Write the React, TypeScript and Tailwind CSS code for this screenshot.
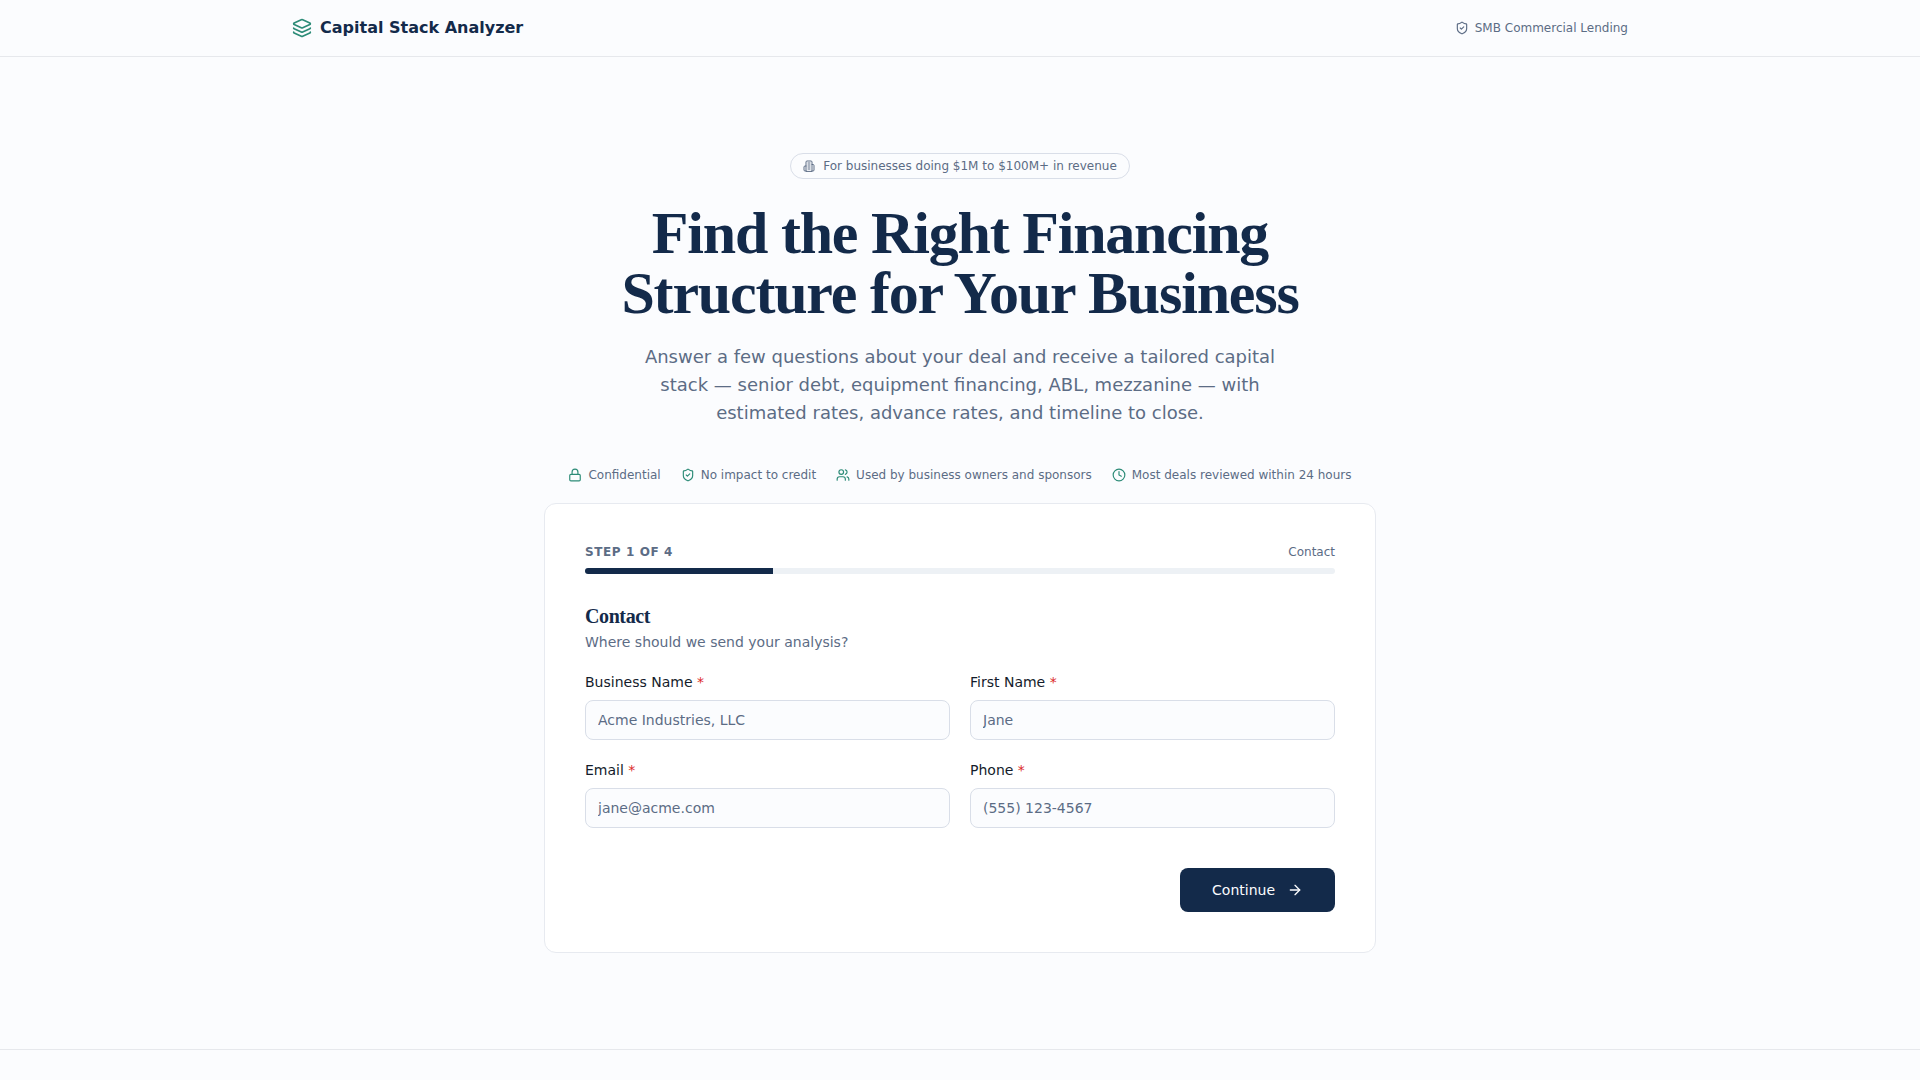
import { ArrowRight, Clock, Layers, Lock, ShieldCheck, Users } from "lucide-react";

const trustItems = [
  { icon: Lock, text: "Confidential" },
  { icon: ShieldCheck, text: "No impact to credit" },
  { icon: Users, text: "Used by business owners and sponsors" },
  { icon: Clock, text: "Most deals reviewed within 24 hours" },
];

const fields = [
  { id: "businessName", label: "Business Name", type: "text", placeholder: "Acme Industries, LLC" },
  { id: "firstName", label: "First Name", type: "text", placeholder: "Jane" },
  { id: "email", label: "Email", type: "email", placeholder: "jane@acme.com" },
  { id: "phone", label: "Phone", type: "tel", placeholder: "(555) 123-4567" },
];

const steps = ["Contact", "Business", "Deal", "Review"];

function BuildingIcon({ className }: { className?: string }) {
  return (
    <svg
      viewBox="0 0 24 24"
      fill="none"
      stroke="currentColor"
      strokeWidth="2"
      strokeLinecap="round"
      strokeLinejoin="round"
      className={className}
      aria-hidden="true"
    >
      <path d="M6 22V4a2 2 0 0 1 2-2h8a2 2 0 0 1 2 2v18Z" />
      <path d="M6 12H4a2 2 0 0 0-2 2v6a2 2 0 0 0 2 2h2" />
      <path d="M18 9h2a2 2 0 0 1 2 2v9a2 2 0 0 1-2 2h-2" />
      <path d="M10 6h4" />
      <path d="M10 10h4" />
      <path d="M10 14h4" />
      <path d="M10 18h4" />
    </svg>
  );
}

export default function App() {
  const step = 0;

  return (
    <div className="min-h-screen bg-[#fbfcfe] font-['DejaVu_Sans',sans-serif] text-[#141c2b]">
      <header className="border-b border-[#e6e8ec]">
        <div className="mx-auto flex h-14 max-w-[1400px] items-center justify-between px-8">
          <div className="flex items-center gap-2">
            <Layers className="size-5 text-[#2c8b77]" />
            <span className="font-semibold text-[#132a4a]">Capital Stack Analyzer</span>
          </div>
          <div className="flex items-center gap-1.5 text-xs text-[#5c6c85]">
            <ShieldCheck className="size-3.5" />
            <span>SMB Commercial Lending</span>
          </div>
        </div>
      </header>

      <main className="px-6 py-24">
        <div className="mx-auto flex max-w-3xl flex-col items-center text-center">
          <div className="mb-6 inline-flex items-center gap-2 rounded-full border border-[#d9dee8] px-3 py-1 text-xs text-[#5c6c85]">
            <BuildingIcon className="size-3" />
            For businesses doing $1M to $100M+ in revenue
          </div>
          <h1 className="font-['Liberation_Serif',serif] text-6xl leading-none font-bold tracking-[-0.02em] text-[#132a4a]">
            Find the Right Financing Structure for Your Business
          </h1>
          <p className="mt-5 max-w-2xl text-lg leading-7 text-[#5c6c85]">
            Answer a few questions about your deal and receive a tailored capital stack — senior debt, equipment
            financing, ABL, mezzanine — with estimated rates, advance rates, and timeline to close.
          </p>
        </div>

        <div className="mx-auto mt-10 max-w-[832px]">
          <ul className="mb-5 flex flex-wrap items-center justify-center gap-x-5 gap-y-2 text-xs text-[#5c6c85]">
            {trustItems.map(({ icon: Icon, text }) => (
              <li key={text} className="flex items-center gap-1.5">
                <Icon className="size-3.5 text-[#2c8b77]" />
                {text}
              </li>
            ))}
          </ul>

          <form
            className="rounded-xl border border-[#e7eaf0] bg-white p-10"
            onSubmit={(e) => e.preventDefault()}
          >
            <div className="flex items-center justify-between text-xs text-[#5c6c85]">
              <span className="font-semibold tracking-wider uppercase">
                Step {step + 1} of {steps.length}
              </span>
              <span>{steps[step]}</span>
            </div>
            <div className="mt-2 h-1.5 overflow-hidden rounded-full bg-[#edf1f5]">
              <div className="h-full bg-[#132a4a]" style={{ width: `${((step + 1) / steps.length) * 100}%` }} />
            </div>

            <h2 className="mt-8 font-['Liberation_Serif',serif] text-xl leading-none font-bold tracking-[-0.02em] text-[#132a4a]">
              Contact
            </h2>
            <p className="mt-1.5 text-sm text-[#5c6c85]">Where should we send your analysis?</p>

            <div className="mt-5 grid gap-5 sm:grid-cols-2">
              {fields.map((f) => (
                <div key={f.id}>
                  <label htmlFor={f.id} className="mb-2 block text-sm font-medium">
                    {f.label} <span className="text-[#dc2828]">*</span>
                  </label>
                  <input
                    id={f.id}
                    name={f.id}
                    type={f.type}
                    placeholder={f.placeholder}
                    className="block h-10 w-full rounded-lg border border-[#d9dee8] bg-[#fbfcfe] px-3 text-sm placeholder:text-[#5c6c85] focus:ring-2 focus:ring-[#132a4a] focus:outline-none"
                  />
                </div>
              ))}
            </div>

            <div className="mt-10 flex justify-end">
              <button
                type="submit"
                className="inline-flex h-11 items-center gap-3 rounded-lg bg-[#132a4a] px-8 text-sm font-medium text-[#fbfcfe] hover:bg-[#132a4a]/90"
              >
                Continue
                <ArrowRight className="size-4" />
              </button>
            </div>
          </form>
        </div>
      </main>

      <footer className="border-t border-[#e6e8ec] py-8" />
    </div>
  );
}
